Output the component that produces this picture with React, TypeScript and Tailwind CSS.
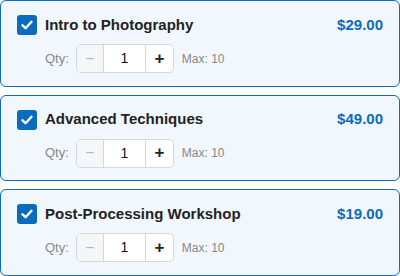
import React from "react";

const items = [
  { title: "Intro to Photography", price: "$29.00" },
  { title: "Advanced Techniques", price: "$49.00" },
  { title: "Post-Processing Workshop", price: "$19.00" },
];

function Check() {
  return (
    <div className="w-5 h-5 rounded-[3px] bg-[#0b6bbf] flex items-center justify-center shrink-0">
      <svg width="14" height="14" viewBox="0 0 14 14" fill="none">
        <path d="M2.5 7.3 L5.6 10.2 L11.5 3.8" stroke="white" strokeWidth="2.4" strokeLinecap="round" strokeLinejoin="round" />
      </svg>
    </div>
  );
}

function Card({ title, price }: { title: string; price: string }) {
  return (
    <div className="border border-[#0b6bbf] rounded-[6px] bg-[#f1f7fc] px-4 pt-3 pb-[12.5px]">
      <div className="flex items-center h-6">
        <Check />
        <div className="ml-2 text-[15px] font-bold text-[#222]">{title}</div>
        <div className="ml-auto text-[15px] font-bold text-[#0b6bbf]">{price}</div>
      </div>
      <div className="flex items-center ml-7 mt-[7px]">
        <span className="text-[13px] text-[#888]">Qty:</span>
        <div className="ml-[7px] flex h-[29px] border border-[#d4d8dc] rounded-[5px] overflow-hidden bg-white">
          <div className="w-[27px] bg-[#f4f6f8] flex items-center justify-center text-[#b5b9bd] text-[16px] border-r border-[#d4d8dc]">−</div>
          <div className="w-[41px] flex items-center justify-center text-[14px] text-[#111]">1</div>
          <div className="w-[28px] flex items-center justify-center text-[17px] font-bold text-[#222] border-l border-[#d4d8dc]">+</div>
        </div>
        <span className="ml-2 text-[12px] text-[#888]">Max: 10</span>
      </div>
    </div>
  );
}

export default function App() {
  return (
    <div className="w-[400px] h-[276px] bg-white flex flex-col gap-2" style={{ fontFamily: '"Liberation Sans", Arial, sans-serif' }}>
      {items.map((it) => (
        <Card key={it.title} {...it} />
      ))}
    </div>
  );
}
